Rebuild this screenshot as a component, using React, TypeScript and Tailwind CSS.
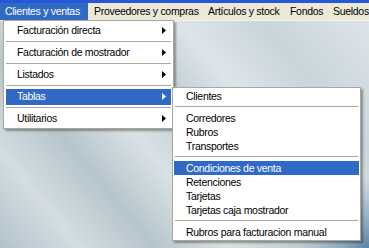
import React from "react";

const font = { fontFamily: '"Liberation Sans", Arial, sans-serif' };

function Arrow({ white }: { white?: boolean }) {
  return (
    <svg width="4" height="7" viewBox="0 0 4 7" className="shrink-0">
      <path d="M0 0 L4 3.5 L0 7 Z" fill={white ? "#ffffff" : "#000000"} />
    </svg>
  );
}

function Sep({ h = 5 }: { h?: number }) {
  return (
    <div className={`flex flex-col justify-center px-[2px] ${h === 5 ? "h-[5px]" : "h-[8px]"}`}>
      <div className="h-px bg-[#aca899]" />
      <div className="h-px bg-white" />
    </div>
  );
}

function MainItem({ label, active }: { label: string; active?: boolean }) {
  return (
    <div className="h-[17px] px-[2px] flex items-center">
      <div
        className={`flex-1 h-[16px] flex items-center pl-[11px] pr-[5px] whitespace-nowrap ${
          active ? "bg-[#316ac5] text-white" : "text-black"
        }`}
      >
        <span className="flex-1">{label}</span>
        <Arrow white={active} />
      </div>
    </div>
  );
}

function SubItem({ label, active }: { label: string; active?: boolean }) {
  return (
    <div className="h-[14px] px-[1px] flex items-center">
      <div
        className={`flex-1 h-[14px] flex items-center pl-[12px] whitespace-nowrap ${
          active ? "bg-[#316ac5] text-white" : "text-black"
        }`}
      >
        {label}
      </div>
    </div>
  );
}

export default function App() {
  return (
    <div
      className="relative w-[369px] h-[248px] overflow-hidden text-[10.5px] tracking-[-0.3px] leading-none bg-[radial-gradient(circle_at_100%_100%,#5b84a6_0px,rgba(91,132,166,0.6)_25px,rgba(91,132,166,0)_70px),linear-gradient(50deg,#b3c2ca_0%,#d3dde2_14%,#b6c5cc_27%,#d9e2e6_40%,#bfcdd3_52%,#dde5e9_64%,#c9d5da_78%,#e0e7ea_100%)]"
      style={font}
    >
      <div className="h-[3px] bg-[#2458d8]" />
      <div className="h-[17px] bg-[#ece9d8] flex items-stretch whitespace-nowrap">
        <div className="w-[88px] pl-[5px] flex items-center bg-[#316ac5] text-white">Clientes y ventas</div>
        <div className="w-[110px] pl-[6px] flex items-center text-black">Proveedores y compras</div>
        <div className="w-[82px] pl-[10px] flex items-center text-black">Artículos y stock</div>
        <div className="w-[43px] pl-[10px] flex items-center text-black">Fondos</div>
        <div className="pl-[10px] flex items-center text-black">Sueldos</div>
      </div>
      <div className="h-px bg-[#f4f3ee]" />

      {/* main dropdown */}
      <div className="absolute left-[3px] top-[20px] w-[171px] bg-white border border-[#aca899] shadow-[2px_2px_2px_rgba(0,0,0,0.35)] py-[1px]">
        <MainItem label="Facturación directa" />
        <Sep />
        <MainItem label="Facturación de mostrador" />
        <Sep />
        <MainItem label="Listados" />
        <Sep />
        <MainItem label="Tablas" active />
        <Sep />
        <MainItem label="Utilitarios" />
      </div>

      {/* submenu */}
      <div className="absolute left-[172px] top-[87px] w-[189px] bg-white border border-[#aca899] shadow-[2px_2px_2px_rgba(0,0,0,0.35)] py-[1px]">
        <SubItem label="Clientes" />
        <Sep h={8} />
        <SubItem label="Corredores" />
        <SubItem label="Rubros" />
        <SubItem label="Transportes" />
        <Sep h={8} />
        <SubItem label="Condiciones de venta" active />
        <SubItem label="Retenciones" />
        <SubItem label="Tarjetas" />
        <SubItem label="Tarjetas caja mostrador" />
        <Sep h={8} />
        <SubItem label="Rubros para facturacion manual" />
      </div>
    </div>
  );
}
